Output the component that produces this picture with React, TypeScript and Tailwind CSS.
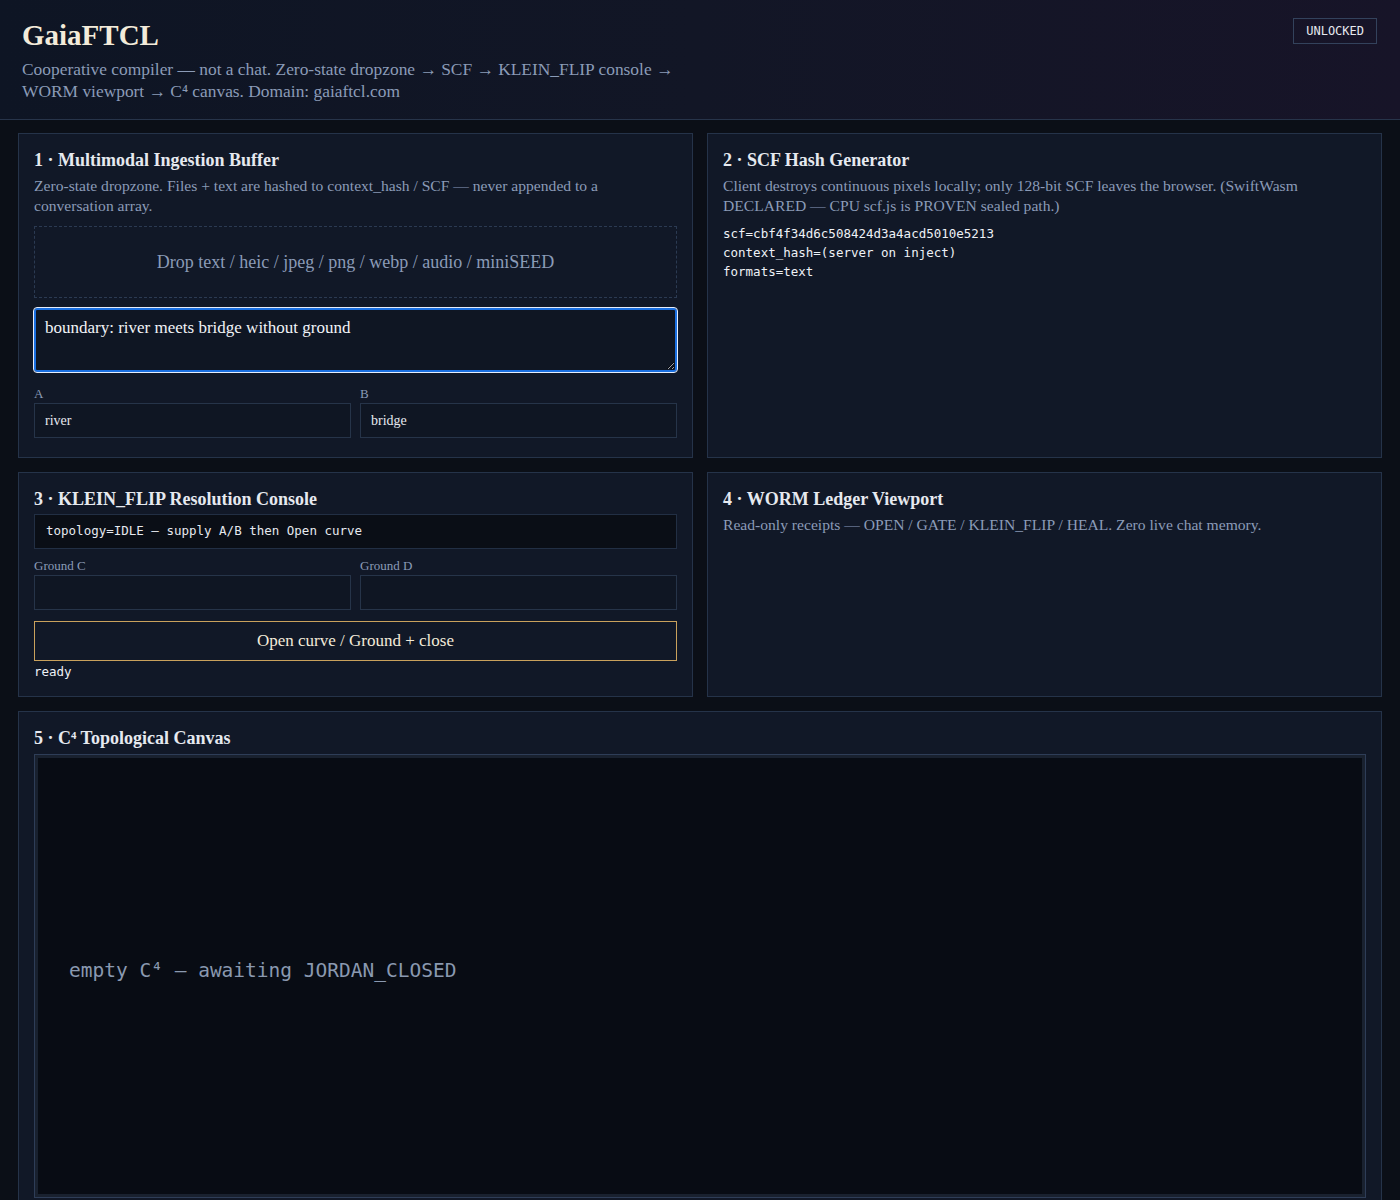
import type { FC, ReactNode } from 'react';

const serif = "font-['Liberation_Serif',serif]";
const mono = "font-['DejaVu_Sans_Mono',monospace]";

type PanelProps = {
  title: ReactNode;
  desc?: ReactNode;
  children?: ReactNode;
  className?: string;
};

const Panel: FC<PanelProps> = ({ title, desc, children, className = '' }) => (
  <section
    className={`border border-[#253349] bg-[#111827] px-[15px] pt-[14px] pb-[19px] ${className}`}
  >
    <h2 className={`${serif} text-[18px] leading-[24px] font-bold text-[#e6e9ef]`}>{title}</h2>
    {desc && (
      <p className={`${serif} mt-[4px] text-[15.6px] leading-[20px] text-[#8b9bb7]`}>{desc}</p>
    )}
    {children}
  </section>
);

const Field: FC<{ label: string; value?: string }> = ({ label, value = '' }) => (
  <label className="flex flex-col">
    <span className={`${serif} text-[13px] leading-[16px] text-[#8b9bb7]`}>{label}</span>
    <input
      readOnly
      value={value}
      className={`${serif} mt-[1px] h-[35px] border border-[#263449] bg-[#0f1623] px-[10px] text-[14px] text-[#e6e9ef] outline-none`}
    />
  </label>
);

export default function App() {
  return (
    <div className="min-h-screen bg-[#0b0f17] text-[#e6e9ef]">
      <header className="flex items-start justify-between border-b border-[#27344a] bg-gradient-to-r from-[#0e1524] via-[#121626] to-[#171428] px-[22px] pt-[18px] pb-[17px]">
        <div>
          <h1 className={`${serif} text-[29px] leading-[34px] font-bold text-[#f3ebda]`}>GaiaFTCL</h1>
          <p className={`${serif} mt-[6px] max-w-[665px] text-[17.4px] leading-[22px] text-[#8b9bb7]`}>
            Cooperative compiler — not a chat. Zero-state dropzone → SCF → KLEIN_FLIP console →
            WORM viewport → C⁴ canvas. Domain: gaiaftcl.com
          </p>
        </div>
        <span
          className={`${mono} mr-[1px] border border-[#33425c] px-[12px] py-[4px] text-[12px] leading-[16px] text-[#e6e9ef]`}
        >
          UNLOCKED
        </span>
      </header>

      <main className="grid grid-cols-2 gap-[14px] p-[18px] pt-[13px]">
        <Panel
          title="1 · Multimodal Ingestion Buffer"
          desc="Zero-state dropzone. Files + text are hashed to context_hash / SCF — never appended to a conversation array."
        >
          <div
            className={`${serif} mt-[10px] flex h-[72px] items-center justify-center border border-dashed border-[#2b3a52] text-[18px] text-[#8b9bb7]`}
          >
            Drop text / heic / jpeg / png / webp / audio / miniSEED
          </div>
          <textarea
            readOnly
            value="boundary: river meets bridge without ground"
            className={`${serif} mt-[10px] block h-[64px] w-full resize-y rounded-[3px] border-2 border-[#1a6fe0] bg-[#0f1623] px-[9px] py-[7px] text-[17px] leading-[22px] text-[#f1f3f7] outline outline-1 outline-[#e6eefc]`}
          />
          <div className="mt-[14px] grid grid-cols-2 gap-[9px]">
            <Field label="A" value="river" />
            <Field label="B" value="bridge" />
          </div>
        </Panel>

        <Panel
          title="2 · SCF Hash Generator"
          desc="Client destroys continuous pixels locally; only 128-bit SCF leaves the browser. (SwiftWasm DECLARED — CPU scf.js is PROVEN sealed path.)"
        >
          <pre className={`${mono} mt-[8px] text-[12.5px] leading-[19px] text-[#eef1f6]`}>
            {'scf=cbf4f34d6c508424d3a4acd5010e5213\ncontext_hash=(server on inject)\nformats=text'}
          </pre>
        </Panel>

        <Panel title="3 · KLEIN_FLIP Resolution Console" className="!pb-[16px]">
          <div
            className={`${mono} mt-[3px] flex h-[35px] items-center border border-[#222f44] bg-[#0a0e16] px-[11px] text-[12.5px] text-[#e6e9ef]`}
          >
            topology=IDLE — supply A/B then Open curve
          </div>
          <div className="mt-[9px] grid grid-cols-2 gap-[9px]">
            <Field label="Ground C" />
            <Field label="Ground D" />
          </div>
          <button
            className={`${serif} mt-[11px] h-[40px] w-full border border-[#c9a15c] bg-[#111827] text-[17px] text-[#f3ebda]`}
          >
            Open curve / Ground + close
          </button>
          <div className={`${mono} mt-[3px] text-[12.5px] leading-[16px] text-[#eef1f6]`}>ready</div>
        </Panel>

        <Panel
          title="4 · WORM Ledger Viewport"
          desc="Read-only receipts — OPEN / GATE / KLEIN_FLIP / HEAL. Zero live chat memory."
        />

        <Panel title="5 · C⁴ Topological Canvas" className="col-span-2 !pb-[16px]">
          <div className="mt-[4px] border border-[#2e3d57] bg-[#19212f] p-[3px]">
            <div className="flex h-[436px] items-center bg-[#080c14] pb-[10px] pl-[31px]">
              <span className={`${mono} text-[19.5px] text-[#8a99b0]`}>
                empty C⁴ — awaiting JORDAN_CLOSED
              </span>
            </div>
          </div>
        </Panel>
      </main>
    </div>
  );
}
